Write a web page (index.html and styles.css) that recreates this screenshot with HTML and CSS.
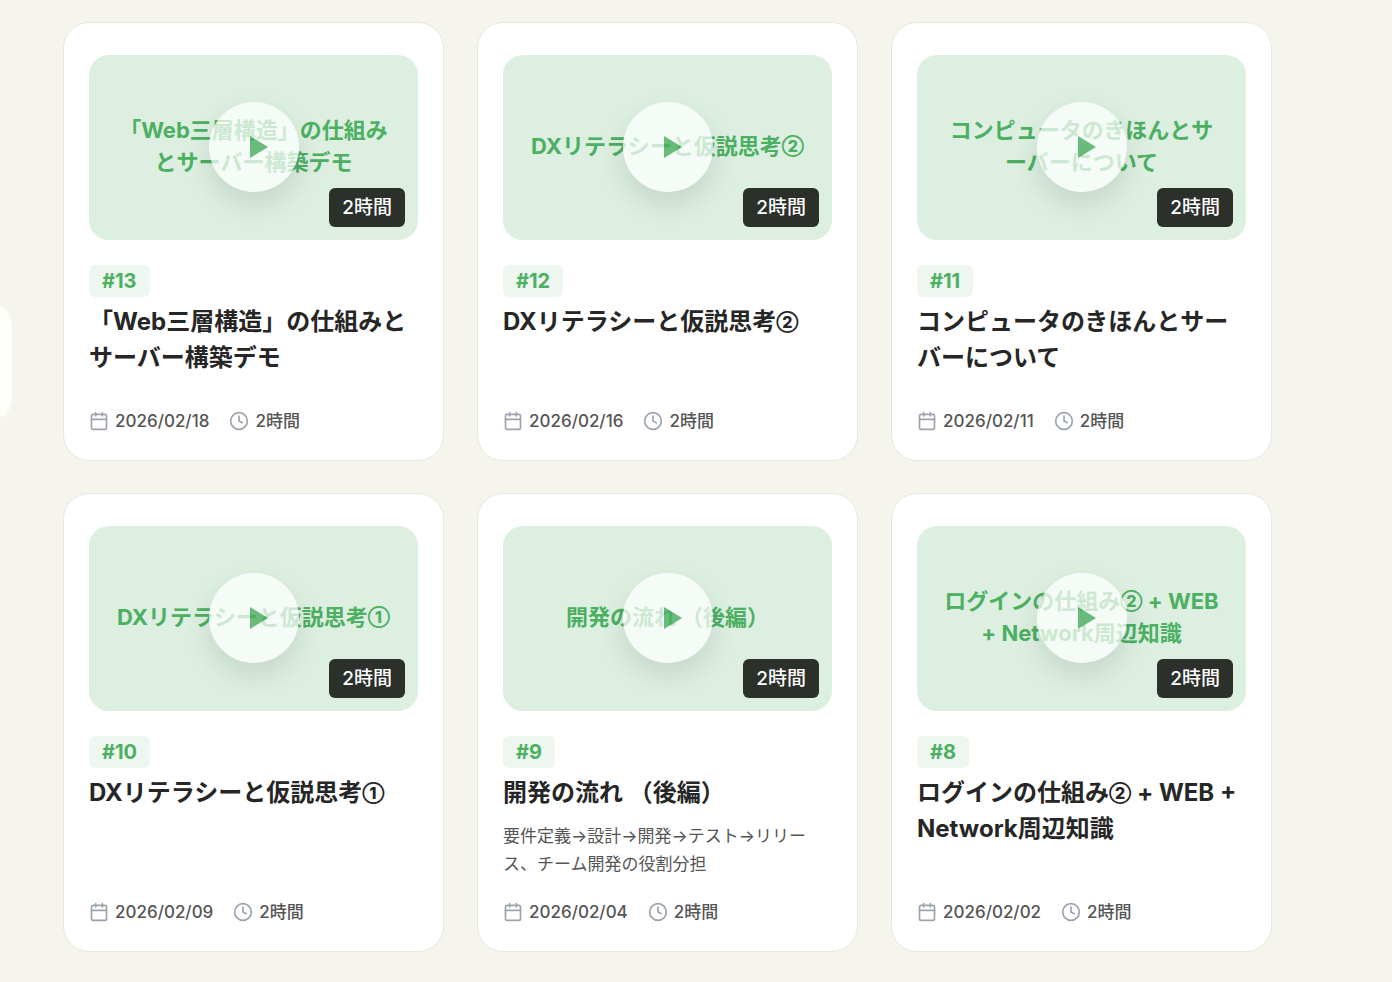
FILE: index.html
```
<!DOCTYPE html>
<html lang="ja">
<head>
    <meta charset="UTF-8">
    <meta name="viewport" content="width=device-width, initial-scale=1.0">
    <title>講義アーカイブ</title>
    <link rel="stylesheet" href="styles.css">
</head>
<body>
    <!-- shared icons -->
    <svg class="icon-defs" aria-hidden="true">
        <symbol id="icon-calendar" viewBox="0 0 24 24">
            <path d="M8 2v4M16 2v4M3 10h18"/>
            <rect x="3" y="4" width="18" height="18" rx="2"/>
        </symbol>
        <symbol id="icon-clock" viewBox="0 0 24 24">
            <circle cx="12" cy="12" r="10"/>
            <path d="M12 6v6l4 2"/>
        </symbol>
        <symbol id="icon-play" viewBox="0 0 18 22">
            <path d="M0 0L18 11L0 22Z"/>
        </symbol>
    </svg>

    <button class="side-tab" aria-label="メニューを開く"></button>

    <main class="lecture-grid">
        <article class="card">
            <div class="thumb">
                <p class="thumb-title">「Web三層構造」の仕組みとサーバー構築デモ</p>
                <button class="play" aria-label="再生"><svg><use href="#icon-play"/></svg></button>
                <span class="duration">2時間</span>
            </div>
            <span class="number">#13</span>
            <h3 class="title">「Web三層構造」の仕組みとサーバー構築デモ</h3>
            <div class="meta">
                <span class="meta-item"><svg><use href="#icon-calendar"/></svg>2026/02/18</span>
                <span class="meta-item"><svg><use href="#icon-clock"/></svg>2時間</span>
            </div>
        </article>

        <article class="card">
            <div class="thumb">
                <p class="thumb-title">DXリテラシーと仮説思考<span class="circled">②</span></p>
                <button class="play" aria-label="再生"><svg><use href="#icon-play"/></svg></button>
                <span class="duration">2時間</span>
            </div>
            <span class="number">#12</span>
            <h3 class="title">DXリテラシーと仮説思考<span class="circled">②</span></h3>
            <div class="meta">
                <span class="meta-item"><svg><use href="#icon-calendar"/></svg>2026/02/16</span>
                <span class="meta-item"><svg><use href="#icon-clock"/></svg>2時間</span>
            </div>
        </article>

        <article class="card">
            <div class="thumb">
                <p class="thumb-title">コンピュータのきほんとサーバーについて</p>
                <button class="play" aria-label="再生"><svg><use href="#icon-play"/></svg></button>
                <span class="duration">2時間</span>
            </div>
            <span class="number">#11</span>
            <h3 class="title">コンピュータのきほんとサーバーについて</h3>
            <div class="meta">
                <span class="meta-item"><svg><use href="#icon-calendar"/></svg>2026/02/11</span>
                <span class="meta-item"><svg><use href="#icon-clock"/></svg>2時間</span>
            </div>
        </article>

        <article class="card">
            <div class="thumb">
                <p class="thumb-title">DXリテラシーと仮説思考<span class="circled">①</span></p>
                <button class="play" aria-label="再生"><svg><use href="#icon-play"/></svg></button>
                <span class="duration">2時間</span>
            </div>
            <span class="number">#10</span>
            <h3 class="title">DXリテラシーと仮説思考<span class="circled">①</span></h3>
            <div class="meta">
                <span class="meta-item"><svg><use href="#icon-calendar"/></svg>2026/02/09</span>
                <span class="meta-item"><svg><use href="#icon-clock"/></svg>2時間</span>
            </div>
        </article>

        <article class="card">
            <div class="thumb">
                <p class="thumb-title">開発の流れ （後編）</p>
                <button class="play" aria-label="再生"><svg><use href="#icon-play"/></svg></button>
                <span class="duration">2時間</span>
            </div>
            <span class="number">#9</span>
            <h3 class="title">開発の流れ （後編）</h3>
            <p class="description">要件定義→設計→開発→テスト→リリース、チーム開発の役割分担</p>
            <div class="meta">
                <span class="meta-item"><svg><use href="#icon-calendar"/></svg>2026/02/04</span>
                <span class="meta-item"><svg><use href="#icon-clock"/></svg>2時間</span>
            </div>
        </article>

        <article class="card">
            <div class="thumb">
                <p class="thumb-title">ログインの仕組み<span class="circled">②</span> + WEB + Network周辺知識</p>
                <button class="play" aria-label="再生"><svg><use href="#icon-play"/></svg></button>
                <span class="duration">2時間</span>
            </div>
            <span class="number">#8</span>
            <h3 class="title">ログインの仕組み<span class="circled">②</span> + WEB + Network周辺知識</h3>
            <div class="meta">
                <span class="meta-item"><svg><use href="#icon-calendar"/></svg>2026/02/02</span>
                <span class="meta-item"><svg><use href="#icon-clock"/></svg>2時間</span>
            </div>
        </article>
    </main>
</body>
</html>
```
FILE: styles.css
```
* {
    box-sizing: border-box;
}

body {
    margin: 0;
    background-color: #f5f4ed;
    color: #262626;
    font-family: Inter, "Noto Sans CJK JP", sans-serif;
}

p, h3 {
    margin: 0;
}

button {
    border: none;
    padding: 0;
    cursor: pointer;
}

.icon-defs {
    display: none;
}

/* handle of the closed side menu */
.side-tab {
    position: fixed;
    left: 0;
    top: 307px;
    width: 12px;
    height: 110px;
    background-color: #fefefb;
    border-radius: 0 12px 12px 0 / 0 22px 22px 0;
}

.lecture-grid {
    display: grid;
    grid-template-columns: repeat(3, 1fr);
    gap: 32px 33px;
    padding: 22px 120px 30px 63px;
}

.card {
    display: flex;
    flex-direction: column;
    align-items: flex-start;
    padding: 32px 25px 25px;
    background-color: #fff;
    border: 1px solid #e8e7e1;
    border-radius: 26px;
}

.thumb {
    position: relative;
    display: flex;
    align-items: center;
    justify-content: center;
    width: 100%;
    aspect-ratio: 16 / 9;
    padding: 0 25px 3px;
    margin-bottom: 25px;
    background-color: #dcefe1;
    border-radius: 20px;
}

.thumb-title {
    color: #4caf62;
    font-size: 22px;
    font-weight: 700;
    line-height: 32px;
    text-align: center;
}

.circled {
    font-size: 16px;
    font-weight: 800;
    line-height: 16px;
    vertical-align: 2px;
}

.play {
    position: absolute;
    inset: 0 0 2px;
    margin: auto;
    display: flex;
    align-items: center;
    justify-content: center;
    width: 90px;
    height: 90px;
    padding-left: 10px;
    border-radius: 50%;
    background-color: rgba(255, 255, 255, 0.9);
    box-shadow: 0 12px 26px rgba(0, 0, 0, 0.12);
    opacity: 0.8;
}

.play svg {
    width: 18px;
    height: 22px;
    fill: #4caf62;
}

.duration {
    position: absolute;
    right: 13px;
    bottom: 13px;
    padding: 5px 13px;
    background-color: #2b302b;
    border-radius: 6px;
    color: #fff;
    font-size: 19px;
    font-weight: 500;
    line-height: 29px;
}

.number {
    padding: 0 13px;
    margin-bottom: 7px;
    background-color: #edf7ef;
    border-radius: 6px;
    color: #4caf62;
    font-size: 20px;
    font-weight: 700;
    line-height: 32px;
}

.title {
    margin-bottom: 11px;
    font-size: 24px;
    font-weight: 700;
    line-height: 36px;
}

.description {
    color: #555;
    font-size: 17px;
    line-height: 28px;
}

.meta {
    display: flex;
    gap: 20px;
    margin-top: auto;
    padding-top: 20px;
}

.meta-item {
    display: flex;
    align-items: center;
    gap: 6px;
    color: #555;
    font-size: 17px;
    font-weight: 500;
    line-height: 28px;
}

.meta-item svg {
    width: 20px;
    height: 20px;
    fill: none;
    stroke: #9ca3af;
    stroke-width: 2;
    stroke-linecap: round;
    stroke-linejoin: round;
}
```
